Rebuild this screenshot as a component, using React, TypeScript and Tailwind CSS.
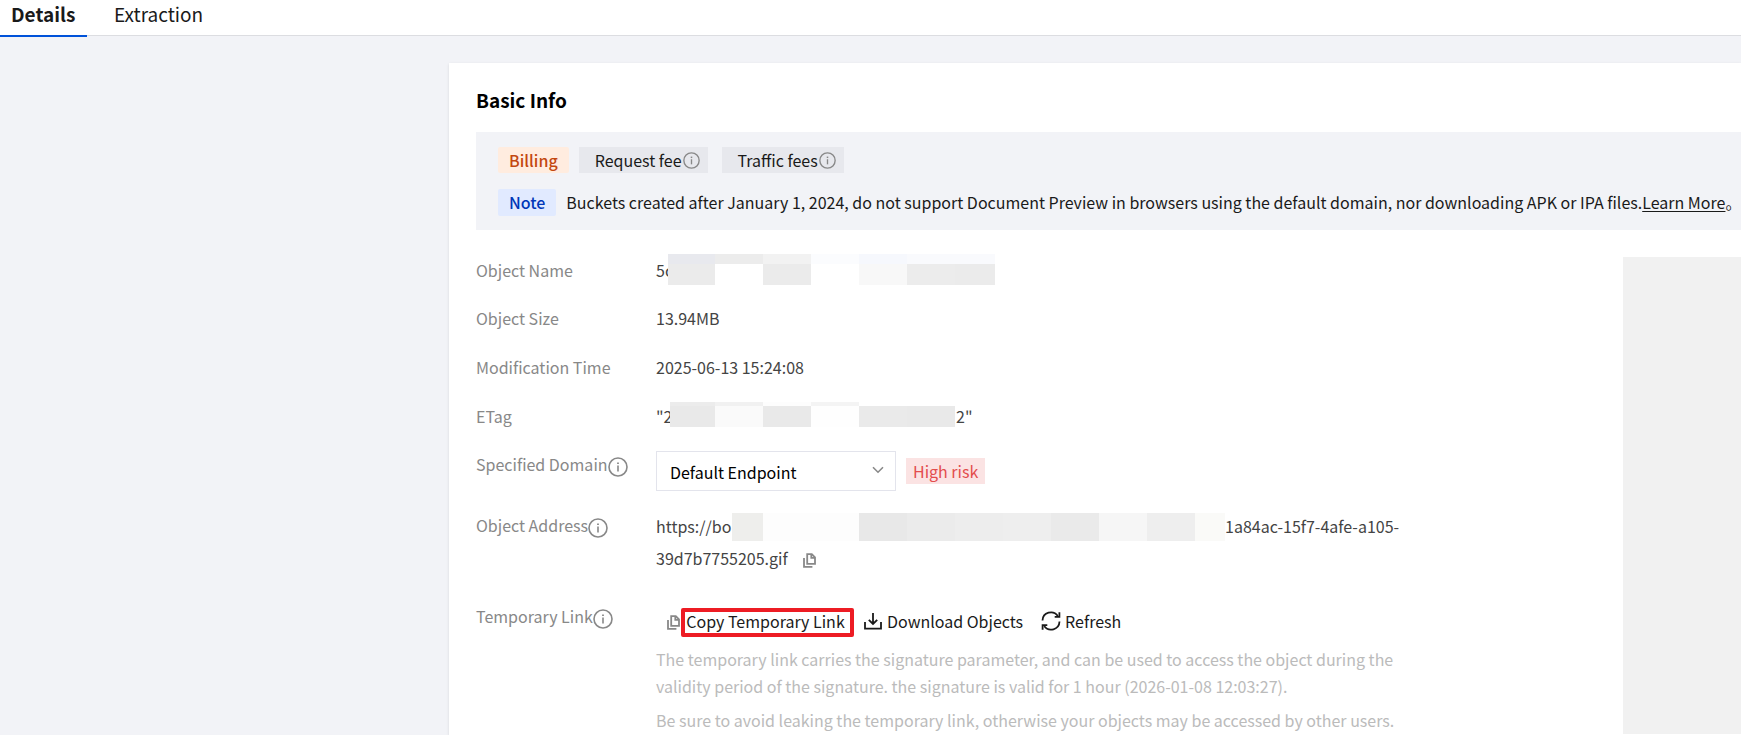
import type { ReactNode } from 'react'

function InfoIcon({ className }: { className: string }) {
    return (
        <svg viewBox="0 0 20 20" fill="none" stroke="currentColor" className={className} aria-hidden="true">
            <circle cx="10" cy="10" r="9" strokeWidth="1.6" />
            <path d="M10 8.5v6" strokeWidth="1.6" />
            <path d="M10 5.4v1.7" strokeWidth="1.8" />
        </svg>
    )
}

function CopyIcon() {
    return (
        <svg viewBox="0 0 13 15" fill="none" stroke="currentColor" strokeWidth="1.8" className="h-[15px] w-[13px]" aria-hidden="true">
            <path d="M4.2 1.1h4.6l3.2 3.2v6.6H4.2z" />
            <path d="M8.3 1.1v3.7H12" />
            <path d="M1 5v8.9h8.4" />
        </svg>
    )
}

function DownloadIcon() {
    return (
        <svg viewBox="0 0 18 18" fill="none" stroke="currentColor" strokeWidth="1.8" className="h-[18px] w-[18px]" aria-hidden="true">
            <path d="M9 1v11M4.8 7.8L9 12l4.2-4.2" />
            <path d="M1 10v6.6h16V10" />
        </svg>
    )
}

function RefreshIcon() {
    return (
        <svg viewBox="0 0 20 20" fill="none" stroke="currentColor" strokeWidth="1.8" className="h-5 w-5" aria-hidden="true">
            <path d="M1.5 9.5A8.4 8.4 0 0 1 16.8 5M18.5 10.5A8.4 8.4 0 0 1 3.2 15" />
            <path d="M18.4 1.2v4.7h-4.7M1.6 18.8v-4.7h4.7" />
        </svg>
    )
}

function Mask({ cells }: { cells: string[] }) {
    return (
        <span className="relative flex self-stretch" aria-hidden="true">
            {cells.map((cell, i) => (
                <span key={i} className={cell} />
            ))}
        </span>
    )
}

function Row({ label, info, className = '', children }: { label: string; info?: boolean; className?: string; children: ReactNode }) {
    return (
        <div className={`flex items-start ${className}`}>
            <dt className="flex h-7 w-[180px] shrink-0 items-center whitespace-nowrap text-[#888]">
                {label}
                {info && <InfoIcon className="mt-1.5 h-5 w-5" />}
            </dt>
            <dd className="min-w-0 text-[#444]">{children}</dd>
        </div>
    )
}

const nameCells = [
    'w-[47px] border-t-10 border-[#e8e9ee] bg-[#ebebeb]',
    'w-12 border-t-10 border-[#ececec] bg-white',
    'w-12 border-t-10 border-[#f2f2f2] bg-[#ebebeb]',
    'w-12 border-t-10 border-[#fbfcfe] bg-white',
    'w-12 border-t-10 border-[#f6f8fd] bg-[#f8f8f8]',
    'w-12 border-t-10 border-[#f9fafd] bg-[#ececec]',
    'w-10 border-t-10 border-[#f9fafd] bg-[#ebebeb]',
]

const etagCells = [
    'w-[45px] border-t-4 border-[#ececec] bg-[#e9e9e9]',
    'w-12 border-t-4 border-[#f1f1f1] bg-[#fafafa]',
    'w-12 border-t-4 border-[#fdfdfd] bg-[#e9e9e9]',
    'w-12 border-t-4 border-[#f4f4f4] bg-[#fefefe]',
    'w-12 border-t-4 border-white bg-[#eaeaea]',
    'w-12 border-t-4 border-white bg-[#e9e9e9]',
]

const addressCells = [
    'w-[31px] bg-[#eeeeec]',
    'w-24 bg-[#fdfdfd]',
    'w-12 bg-[#e8e8e8]',
    'w-12 bg-[#ebebeb]',
    'w-12 bg-[#ededed]',
    'w-12 bg-[#eeeeee]',
    'w-12 bg-[#eaeaea]',
    'w-12 bg-[#f6f6f6]',
    'w-12 bg-[#eeeeee]',
    'w-[30px] bg-[#fafaf8]',
]

export default function App() {
    return (
        <div className="flex min-h-screen flex-col overflow-hidden bg-[#f2f3f7] font-['Noto_Sans_CJK_SC',sans-serif] text-base leading-7 text-[#1a1a1a]">
            <nav className="flex h-9 items-start border-b border-[#dcdde1] bg-white text-[19px] leading-7">
                <a href="#details" className="h-[37px] w-[87px] border-b-2 border-[#0052d9] pl-[11px] font-bold">
                    Details
                </a>
                <a href="#extraction" className="h-[37px] pl-[27px]">
                    Extraction
                </a>
            </nav>
            <main className="mt-[27px] ml-[449px] flex-1 bg-white pt-[23px] pl-[27px] shadow-sm">
                <h2 className="text-[19px] font-bold text-black">Basic Info</h2>
                <section className="mt-[18px] flex h-[98px] flex-col gap-4 bg-[#f2f3f7] pt-[15px] pl-[22px] whitespace-nowrap">
                    <div className="flex h-[26px] items-center">
                        <span className="mr-[10px] rounded-xs bg-[#ffecdf] px-[11px] leading-[26px] font-medium text-[#c3470f]">Billing</span>
                        <span className="mr-[14px] flex items-center gap-px bg-[#e7e8ed] pr-2 pl-4 leading-[26px]">
                            Request fee
                            <InfoIcon className="h-[17px] w-[17px] text-[#888]" />
                        </span>
                        <span className="flex items-center gap-px bg-[#e7e8ed] pr-2 pl-4 leading-[26px]">
                            Traffic fees
                            <InfoIcon className="h-[17px] w-[17px] text-[#888]" />
                        </span>
                    </div>
                    <div className="flex items-center">
                        <span className="mr-[10px] rounded-xs bg-[#e1eaff] px-[11px] leading-[27px] font-medium text-[#0037b8]">Note</span>
                        <p className="leading-[27px]">
                            Buckets created after January 1, 2024, do not support Document Preview in browsers using the default domain, nor downloading APK or IPA files.
                            <a href="#learn" className="underline underline-offset-2">Learn More</a>。
                        </p>
                    </div>
                </section>
                <div className="flex justify-between">
                    <dl className="w-[930px] pt-6">
                        <Row label="Object Name" className="h-12 pt-[2px]">
                            <div className="-mt-[2px] flex h-[31px]">
                                <span className="w-3 pt-[2px]">5c</span>
                                <Mask cells={nameCells} />
                            </div>
                        </Row>
                        <Row label="Object Size" className="h-[49px] pt-[2px]">13.94MB</Row>
                        <Row label="Modification Time" className="h-[49px] pt-[2px]">2025-06-13 15:24:08</Row>
                        <Row label="ETag" className="h-[50px] pt-[2px]">
                            <div className="flex h-7 items-start">
                                <span className="w-[14px]">"2</span>
                                <div className="flex h-[25px]">
                                    <Mask cells={etagCells} />
                                </div>
                                <span className="pl-px">2"</span>
                            </div>
                        </Row>
                        <Row label="Specified Domain" info className="h-[61px]">
                            <div className="mt-px flex items-center gap-[10px]">
                                <div className="relative">
                                    <select aria-label="Specified Domain" className="h-10 w-60 appearance-none border border-[#e3e4ec] bg-white pt-[2px] pl-[13px] text-black">
                                        <option>Default Endpoint</option>
                                    </select>
                                    <svg viewBox="0 0 12 8" fill="none" stroke="#888" strokeWidth="1.6" className="pointer-events-none absolute top-[15px] right-3 h-2 w-3" aria-hidden="true">
                                        <path d="M1 1.2l5 5 5-5" />
                                    </svg>
                                </div>
                                <span className="bg-[#fbe3e3] px-[7px] leading-[26px] text-[#e34d4d]">High risk</span>
                            </div>
                        </Row>
                        <Row label="Object Address" info className="h-[91px]">
                            <div className="mt-[2px] flex h-7 leading-[26px] whitespace-nowrap">
                                <span className="w-[76px]">https://bo</span>
                                <Mask cells={addressCells} />
                                <span>1a84ac-15f7-4afe-a105-</span>
                            </div>
                            <div className="flex h-[34px] items-center gap-[15px]">
                                39d7b7755205.gif
                                <button type="button" aria-label="Copy object address" className="mt-1 text-[#888]">
                                    <CopyIcon />
                                </button>
                            </div>
                        </Row>
                        <Row label="Temporary Link" info>
                            <div className="flex h-10 items-center pl-[11px] leading-[18px] text-[#1a1a1a]">
                                <button type="button" className="flex items-center">
                                    <span className="text-[#888]"><CopyIcon /></span>
                                    <span className="mt-px ml-px h-[29px] w-[173px] rounded-xs border-4 border-[#ed1c24] pr-1 text-center whitespace-nowrap">
                                        Copy Temporary Link
                                    </span>
                                </button>
                                <button type="button" className="mb-[2px] ml-[10px] flex items-center gap-[5px]">
                                    <DownloadIcon />
                                    Download Objects
                                </button>
                                <button type="button" className="mb-[2px] ml-[18px] flex items-center gap-1">
                                    <RefreshIcon />
                                    Refresh
                                </button>
                            </div>
                            <div className="w-[750px] pt-1 leading-[27px] text-[#bbb]">
                                <p>
                                    The temporary link carries the signature parameter, and can be used to access the object during the validity period of the signature. the signature is valid for 1 hour (2026-01-08 12:03:27).
                                </p>
                                <p className="mt-[7px]">Be sure to avoid leaking the temporary link, otherwise your objects may be accessed by other users.</p>
                            </div>
                        </Row>
                    </dl>
                    <aside className="mt-[27px] w-[118px] bg-[#f1f1f1]" />
                </div>
            </main>
        </div>
    )
}
